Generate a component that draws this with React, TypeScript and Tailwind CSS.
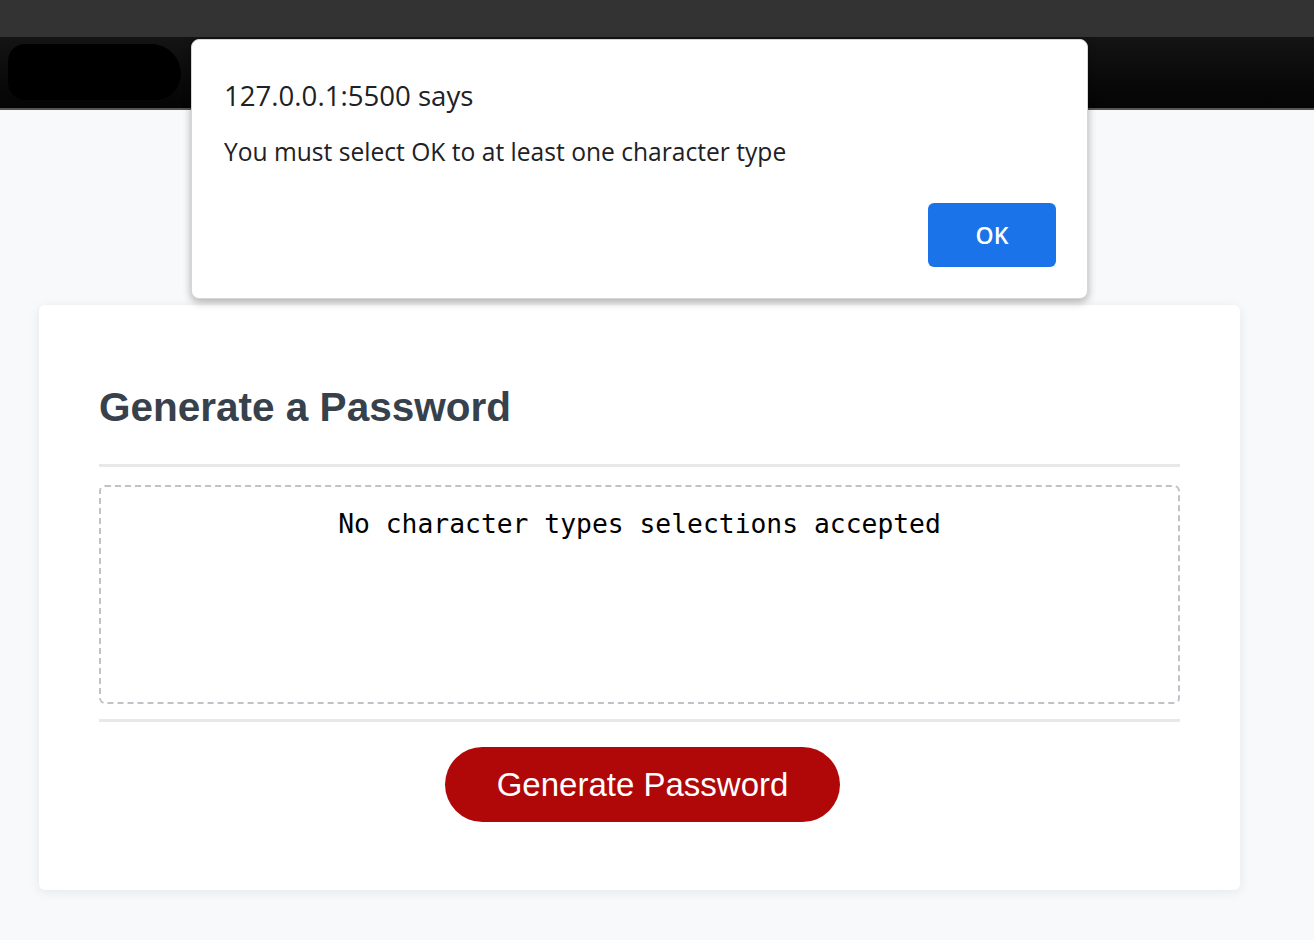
export default function App() {
  return (
    <div className="relative min-h-[940px] bg-[#f8f9fa] font-['Liberation_Sans',Arial,sans-serif]">
      {/* browser chrome + redacted header */}
      <div className="h-[37px] bg-[#333333]" />
      <div className="h-[73px] border-b-2 border-[#555] bg-gradient-to-b from-[#141414] to-[#050505] pl-[8px] pt-[7px]">
        <div className="h-[56px] w-[173px] rounded-[40px_70px_60px_40px] bg-black" />
      </div>

      <main className="pt-[195px]">
        <div className="ml-[39px] w-[1201px] rounded-md bg-white px-[60px] pt-[78px] pb-[68px] shadow-[0_2px_12px_rgba(0,0,0,0.08)]">
          <h2 className="mb-[33px] text-[40.5px] leading-[48px] font-bold text-[#37414c]">
            Generate a Password
          </h2>
          <div className="h-[3px] bg-[#e7e8e9]" />
          <div className="mt-[18px] h-[219px] rounded-md border-[2.5px] border-dashed border-[#bfc3c7] pt-[18px] text-center">
            <p className="font-['DejaVu_Sans_Mono',monospace] text-[26.35px] leading-[39px] text-black">
              No character types selections accepted
            </p>
          </div>
          <div className="mt-[15px] h-[3px] bg-[#e7e8e9]" />
          <div className="mt-[25px] flex justify-center">
            <button className="ml-[6px] h-[75px] w-[395px] rounded-full bg-[#b00808] text-[33px] text-white">
              Generate Password
            </button>
          </div>
        </div>
      </main>

      {/* alert dialog */}
      <div className="absolute left-[191px] top-[39px] h-[260px] w-[897px] rounded-lg border border-[#d6d6d6] bg-white pl-[32px] pr-[31px] font-['Open_Sans',sans-serif] text-[#202124] shadow-[0_3px_8px_rgba(0,0,0,0.3)]">
        <div className="pt-[37px] text-[27.6px] leading-[36px]">127.0.0.1:5500 says</div>
        <div className="mt-[22px] text-[24.6px] leading-[34px]">
          You must select OK to at least one character type
        </div>
        <div className="mt-[34px] flex justify-end">
          <button className="h-[64px] w-[128px] rounded-md bg-[#1a73e8] text-[23px] font-semibold text-white">
            OK
          </button>
        </div>
      </div>
    </div>
  )
}
